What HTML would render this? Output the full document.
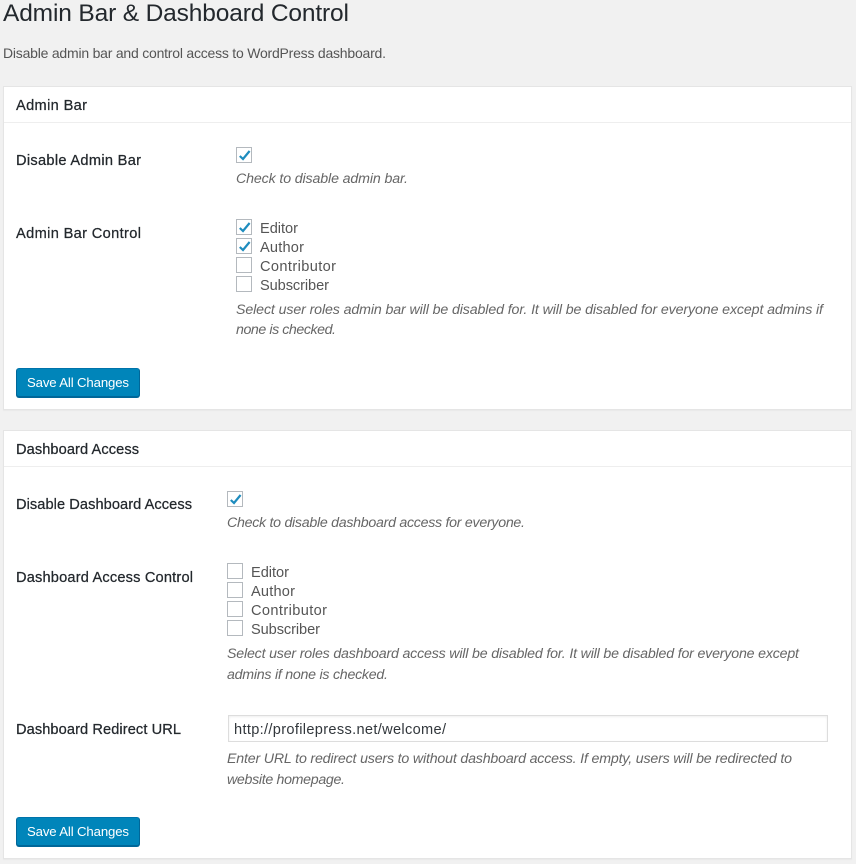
<!DOCTYPE html>
<html><head><meta charset="utf-8"><style>
html,body{margin:0;padding:0;width:856px;height:864px;overflow:hidden;background:#f1f1f1}
.card{position:absolute;left:3px;width:847px;background:#fff;border:1px solid #e5e5e5;box-shadow:0 1px 1px rgba(0,0,0,.04)}
.hr{position:absolute;left:4px;width:847px;height:1px;background:#eee}
.btn{position:absolute;left:16px;width:122px;height:27px;background:#0085ba;border:1px solid #0073aa;border-color:#0073aa #006799 #006799;border-radius:3px;box-shadow:0 1px 0 #006799}
.in{position:absolute;left:228px;top:715px;width:598px;height:25px;background:#fff;border:1px solid #ddd;box-shadow:inset 0 1px 2px rgba(0,0,0,.07)}
svg{position:absolute;left:0;top:0}
text{font-family:"Liberation Sans",sans-serif;font-size:14px}
.h{fill:#23282d;stroke:#23282d;stroke-width:.25px;font-size:14.6px}
.l{fill:#555;font-size:14.6px}
.s{fill:#555;font-size:14px}
.d{fill:#666;font-style:italic;font-size:14.2px}
.b{fill:#fff;font-size:13.2px}
.cb{fill:#fff;stroke:#b4b9be;stroke-width:1}
.ck{fill:none;stroke:#1e8cbe;stroke-width:2.2}
</style></head><body>
<div class="card" style="top:86px;height:322px"></div>
<div class="hr" style="top:122px"></div>
<div class="btn" style="top:368px"></div>
<div class="card" style="top:430px;height:427px"></div>
<div class="hr" style="top:466px"></div>
<div class="in"></div>
<div class="btn" style="top:817px"></div>
<svg width="856" height="864" viewBox="0 0 856 864">
<text x="3" y="21" textLength="346" style="font-size:24.500px;fill:#23282d">Admin Bar &amp; Dashboard Control</text>
<text x="3" y="58" textLength="383" class="s">Disable admin bar and control access to WordPress dashboard.</text>

<text x="16" y="110" textLength="71" class="h">Admin Bar</text>
<text x="16" y="165" textLength="125" class="h">Disable Admin Bar</text>
<rect class="cb" x="236.500" y="147.500" width="15" height="15"/>
<path class="ck" d="M239.800 156L243 159L249.600 151"/>
<text x="236" y="183" textLength="172" class="d">Check to disable admin bar.</text>

<text x="16" y="238" textLength="125" class="h">Admin Bar Control</text>
<rect class="cb" x="236.500" y="219.500" width="15" height="15"/>
<path class="ck" d="M239.800 228L243 231L249.600 223"/>
<rect class="cb" x="236.500" y="238.500" width="15" height="15"/>
<path class="ck" d="M239.800 247L243 250L249.600 242"/>
<rect class="cb" x="236.500" y="257.500" width="15" height="15"/>
<rect class="cb" x="236.500" y="276.500" width="15" height="15"/>
<text x="260" y="233" textLength="38" class="l">Editor</text>
<text x="260" y="252" textLength="44" class="l">Author</text>
<text x="260" y="271" textLength="76" class="l">Contributor</text>
<text x="260" y="290" textLength="69" class="l">Subscriber</text>
<text x="236" y="314" textLength="587" class="d">Select user roles admin bar will be disabled for. It will be disabled for everyone except admins if</text>
<text x="236" y="334" textLength="100" class="d">none is checked.</text>
<text x="27" y="387" textLength="102" class="b">Save All Changes</text>

<text x="16" y="454" textLength="123" class="h">Dashboard Access</text>
<text x="16" y="509" textLength="176" class="h">Disable Dashboard Access</text>
<rect class="cb" x="227.500" y="491.500" width="15" height="15"/>
<path class="ck" d="M230.800 500L234 503L240.600 495"/>
<text x="227" y="527" textLength="298" class="d">Check to disable dashboard access for everyone.</text>

<text x="16" y="582" textLength="177" class="h">Dashboard Access Control</text>
<rect class="cb" x="227.500" y="563.500" width="15" height="15"/>
<rect class="cb" x="227.500" y="582.500" width="15" height="15"/>
<rect class="cb" x="227.500" y="601.500" width="15" height="15"/>
<rect class="cb" x="227.500" y="620.500" width="15" height="15"/>
<text x="251" y="577" textLength="38" class="l">Editor</text>
<text x="251" y="596" textLength="44" class="l">Author</text>
<text x="251" y="615" textLength="76" class="l">Contributor</text>
<text x="251" y="634" textLength="69" class="l">Subscriber</text>
<text x="227" y="658" textLength="572" class="d">Select user roles dashboard access will be disabled for. It will be disabled for everyone except</text>
<text x="227" y="679" textLength="161" class="d">admins if none is checked.</text>

<text x="16" y="734" textLength="165" class="h">Dashboard Redirect URL</text>
<text x="234" y="734" textLength="212" style="font-size:14.600px;fill:#32373c">http://profilepress.net/welcome/</text>
<text x="227" y="763" textLength="565" class="d">Enter URL to redirect users to without dashboard access. If empty, users will be redirected to</text>
<text x="227" y="784" textLength="118" class="d">website homepage.</text>
<text x="27" y="836" textLength="102" class="b">Save All Changes</text>
</svg>
</body></html>
